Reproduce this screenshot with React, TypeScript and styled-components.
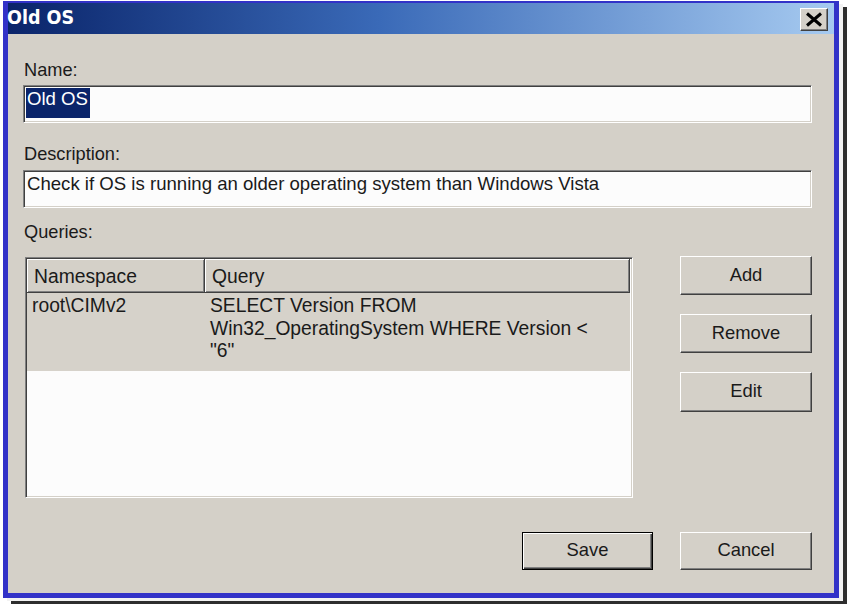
import React from "react";
import styled, { createGlobalStyle } from "styled-components";

const GlobalStyle = createGlobalStyle`
  html, body { margin: 0; padding: 0; background: #ffffff; }
  body { font-family: "Liberation Sans", Arial, sans-serif; color: #1a1a1a; }
`;

const Page = styled.div`
  width: 852px;
  height: 610px;
  box-sizing: border-box;
  padding: 1px 0 0 3px;
  overflow: hidden;
`;

const Window = styled.div`
  width: 836px;
  height: 597px;
  box-sizing: border-box;
  border: 5px solid #3232c8;
  border-top-width: 2px;
  background: #d4d0c8;
  display: flex;
  flex-direction: column;
  box-shadow: 4px 3px 0 0 #f2f2f2, 8px 6px 0 0 #2e2e2e;
`;

const TitleBar = styled.div`
  height: 31px;
  flex: none;
  display: flex;
  align-items: center;
  justify-content: space-between;
  padding: 0 6px 0 0;
  background: linear-gradient(to right, #0a246a 0%, #3a6ab8 45%, #a6caf0 100%);
`;

const Title = styled.span`
  font-family: "DejaVu Sans Condensed", "DejaVu Sans", sans-serif;
  font-stretch: condensed;
  font-weight: bold;
  font-size: 19.5px;
  color: #ffffff;
  line-height: 24px;
  margin-top: -2px;
  margin-left: -1px;
`;

const CloseButton = styled.div`
  width: 28px;
  height: 23px;
  box-sizing: border-box;
  align-self: flex-end;
  margin-bottom: 3px;
  background: #d4d0c8;
  border: 1px solid;
  border-color: #ffffff #404040 #404040 #ffffff;
  box-shadow: inset -1px -1px #808080;
  display: flex;
  align-items: center;
  justify-content: center;
`;

const Body = styled.div`
  flex: 1;
  display: flex;
  flex-direction: column;
  padding: 25px 22px 23px 15px;
`;

const Label = styled.div<{ $gap: number }>`
  font-size: 18.2px;
  line-height: 22px;
  margin: ${(p) => p.$gap}px 0 0 1px;
`;

const TextBox = styled.div<{ $gap: number }>`
  height: 38px;
  box-sizing: border-box;
  margin-top: ${(p) => p.$gap}px;
  background: #fcfcfc;
  border: 1px solid;
  border-color: #808080 #ffffff #ffffff #808080;
  box-shadow: inset 1px 1px #404040, inset -1px -1px #d4d0c8;
  padding: 2px 3px 0 3px;
  font-size: 18.6px;
  line-height: 22px;
  white-space: nowrap;
  overflow: hidden;
`;

const Selected = styled.span`
  display: inline-block;
  background: #0a246a;
  color: #ffffff;
  padding: 0 2px 8px 1px;
  margin-left: -1px;
`;

const Middle = styled.div`
  display: flex;
  margin-top: 13px;
`;

const ListView = styled.div`
  width: 608px;
  height: 241px;
  box-sizing: border-box;
  margin: 1px 0 0 2px;
  background: #fcfcfc;
  border: 1px solid;
  border-color: #808080 #ffffff #ffffff #808080;
  box-shadow: inset 1px 1px #404040, inset -1px -1px #d4d0c8;
  padding: 1px 2px 2px 1px;
  display: flex;
  flex-direction: column;
  overflow: hidden;
  font-size: 19.3px;
`;

const HeaderRow = styled.div`
  display: flex;
  height: 34px;
  flex: none;
`;

const HeaderCell = styled.div<{ $w: number }>`
  width: ${(p) => p.$w}px;
  box-sizing: border-box;
  background: #d4d0c8;
  border-right: 1px solid #404040;
  border-bottom: 1px solid #404040;
  box-shadow: inset 1px 1px #ffffff, inset -1px -1px #808080;
  padding: 2px 0 0 7px;
  display: flex;
  align-items: center;
  line-height: 22px;
`;

const DataRow = styled.div`
  display: flex;
  height: 78px;
  flex: none;
  background: #d6d2ca;
`;

const Cell = styled.div<{ $w: number }>`
  width: ${(p) => p.$w}px;
  box-sizing: border-box;
  padding: 2px 0 0 5px;
  line-height: 22.5px;
`;

const Line = styled.div`
  white-space: nowrap;
`;

const SideButtons = styled.div`
  margin-left: auto;
  width: 132px;
  display: flex;
  flex-direction: column;
  gap: 19px;
`;

const Button = styled.div<{ $w?: number; $h?: number; $default?: boolean }>`
  width: ${(p) => p.$w ?? 132}px;
  height: ${(p) => p.$h ?? 39}px;
  box-sizing: border-box;
  background: #d4d0c8;
  font-size: 18.4px;
  display: flex;
  align-items: center;
  justify-content: center;
  padding-bottom: 2px;
  border: 1px solid;
  border-color: ${(p) =>
    p.$default ? "#000000" : "#ffffff #404040 #404040 #ffffff"};
  box-shadow: ${(p) =>
    p.$default
      ? "inset 1px 1px #ffffff, inset -1px -1px #404040, inset -2px -2px #808080"
      : "inset -1px -1px #808080"};
`;

const Footer = styled.div`
  margin-top: auto;
  display: flex;
  justify-content: flex-end;
  gap: 27px;
`;

const CloseIcon = () => (
  <svg width="18" height="15" viewBox="0 0 18 15">
    <path d="M2 1.5 L16 13.5 M16 1.5 L2 13.5" stroke="#000" strokeWidth="3" fill="none" />
  </svg>
);

const queryLines = [
  "SELECT Version FROM",
  "Win32_OperatingSystem WHERE Version <",
  "\"6\"",
];

export default function App() {
  return (
    <>
      <GlobalStyle />
      <Page>
        <Window>
          <TitleBar>
            <Title>Old OS</Title>
            <CloseButton>
              <CloseIcon />
            </CloseButton>
          </TitleBar>
          <Body>
            <Label $gap={0}>Name:</Label>
            <TextBox $gap={4}>
              <Selected>Old OS</Selected>
            </TextBox>
            <Label $gap={20}>Description:</Label>
            <TextBox $gap={5}>
              Check if OS is running an older operating system than Windows Vista
            </TextBox>
            <Label $gap={13}>Queries:</Label>
            <Middle>
              <ListView>
                <HeaderRow>
                  <HeaderCell $w={178}>Namespace</HeaderCell>
                  <HeaderCell $w={425}>Query</HeaderCell>
                </HeaderRow>
                <DataRow>
                  <Cell $w={178}>
                    <Line>root\CIMv2</Line>
                  </Cell>
                  <Cell $w={425}>
                    {queryLines.map((l) => (
                      <Line key={l}>{l}</Line>
                    ))}
                  </Cell>
                </DataRow>
              </ListView>
              <SideButtons>
                <Button>Add</Button>
                <Button>Remove</Button>
                <Button $h={40}>Edit</Button>
              </SideButtons>
            </Middle>
            <Footer>
              <Button $w={131} $h={38} $default>
                Save
              </Button>
              <Button $w={132} $h={38}>
                Cancel
              </Button>
            </Footer>
          </Body>
        </Window>
      </Page>
    </>
  );
}
